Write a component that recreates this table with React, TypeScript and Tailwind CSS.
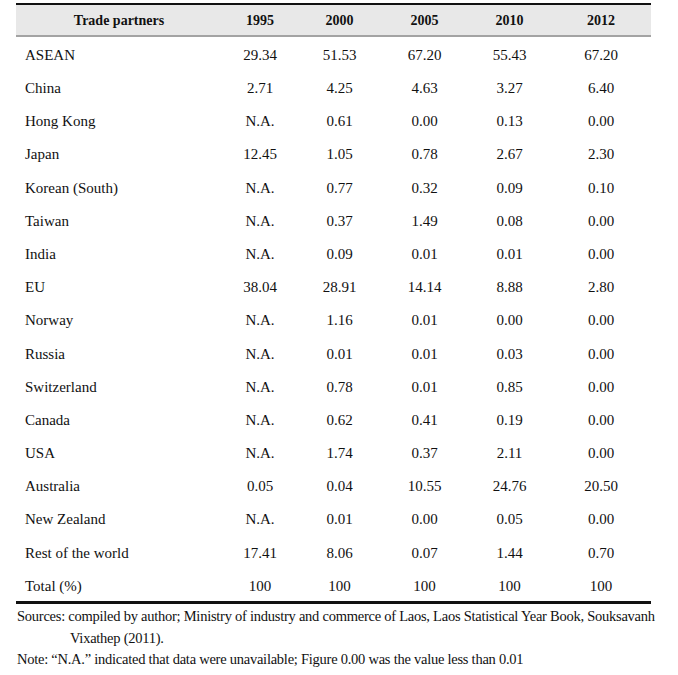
const rows: [string, string, string, string, string, string][] = [
  ['ASEAN', '29.34', '51.53', '67.20', '55.43', '67.20'],
  ['China', '2.71', '4.25', '4.63', '3.27', '6.40'],
  ['Hong Kong', 'N.A.', '0.61', '0.00', '0.13', '0.00'],
  ['Japan', '12.45', '1.05', '0.78', '2.67', '2.30'],
  ['Korean (South)', 'N.A.', '0.77', '0.32', '0.09', '0.10'],
  ['Taiwan', 'N.A.', '0.37', '1.49', '0.08', '0.00'],
  ['India', 'N.A.', '0.09', '0.01', '0.01', '0.00'],
  ['EU', '38.04', '28.91', '14.14', '8.88', '2.80'],
  ['Norway', 'N.A.', '1.16', '0.01', '0.00', '0.00'],
  ['Russia', 'N.A.', '0.01', '0.01', '0.03', '0.00'],
  ['Switzerland', 'N.A.', '0.78', '0.01', '0.85', '0.00'],
  ['Canada', 'N.A.', '0.62', '0.41', '0.19', '0.00'],
  ['USA', 'N.A.', '1.74', '0.37', '2.11', '0.00'],
  ['Australia', '0.05', '0.04', '10.55', '24.76', '20.50'],
  ['New Zealand', 'N.A.', '0.01', '0.00', '0.05', '0.00'],
  ['Rest of the world', '17.41', '8.06', '0.07', '1.44', '0.70'],
  ['Total (%)', '100', '100', '100', '100', '100'],
];

const years = ['1995', '2000', '2005', '2010', '2012'];
const cols = 'grid grid-cols-[206px_76px_83px_87px_83px_100px]';

export default function App() {
  return (
    <div className="w-[678px] h-[675px] bg-white text-[#111] pt-[3px] pl-[16px] font-['Liberation_Serif','Times_New_Roman',serif] overflow-hidden">
      <div className="w-[635px] border-t-[2.5px] border-b-[3px] border-[#111]">
        <div className={`${cols} h-[32px] bg-[#e8e8e8] border-b-[2px] border-[#a3a3a3] items-center text-[14px] font-bold`}>
          <div className="text-center">Trade partners</div>
          {years.map((y) => (
            <div key={y} className="text-center">{y}</div>
          ))}
        </div>
        {rows.map((r) => (
          <div key={r[0]} className={`${cols} h-[33.2px] items-center pt-[3px] text-[15px]`}>
            <div className="pl-[9px]">{r[0]}</div>
            {r.slice(1).map((v, i) => (
              <div key={i} className="text-center">{v}</div>
            ))}
          </div>
        ))}
      </div>
      <div className="text-[14.5px] tracking-[-0.25px] leading-[21.5px] pt-[2px] whitespace-nowrap">
        <div className="pl-[1px]">Sources: compiled by author; Ministry of industry and commerce of Laos, Laos Statistical Year Book, Souksavanh</div>
        <div className="pl-[54px]">Vixathep (2011).</div>
        <div className="pl-[1px]">Note: “N.A.” indicated that data were unavailable; Figure 0.00 was the value less than 0.01</div>
      </div>
    </div>
  );
}
